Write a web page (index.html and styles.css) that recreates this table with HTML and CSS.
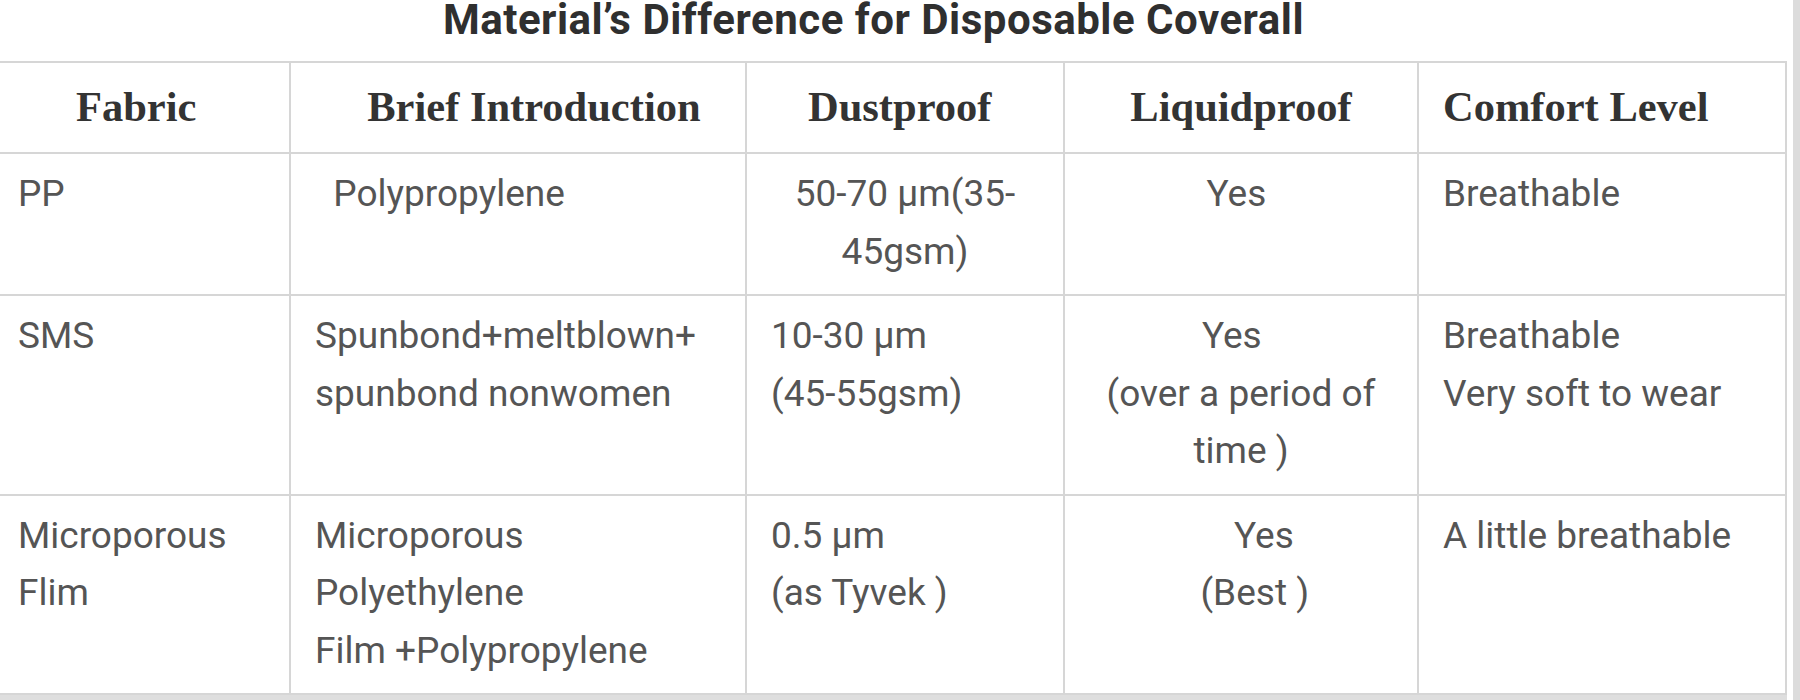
FILE: index.html
```html
<!DOCTYPE html>
<html lang="en">
<head>
<meta charset="utf-8">
<title>Material's Difference for Disposable Coverall</title>
<link rel="stylesheet" href="styles.css">
</head>
<body>
<div class="page">
  <div class="scroller">
    <h2 class="title">Material’s Difference for Disposable Coverall</h2>
    <table class="compare">
      <colgroup>
        <col class="c1"><col class="c2"><col class="c3"><col class="c4"><col class="c5">
      </colgroup>
      <thead>
        <tr>
          <th>Fabric&nbsp;</th>
          <th>&nbsp;&nbsp;&nbsp;Brief Introduction</th>
          <th>Dustproof&nbsp;</th>
          <th>Liquidproof</th>
          <th class="left">Comfort Level</th>
        </tr>
      </thead>
      <tbody>
        <tr>
          <td>PP</td>
          <td>&nbsp;&nbsp;Polypropylene</td>
          <td class="center">50-70 μm(35-<br>45gsm)</td>
          <td class="center">Yes&nbsp;</td>
          <td>Breathable</td>
        </tr>
        <tr>
          <td>SMS</td>
          <td>Spunbond+meltblown+<br>spunbond nonwomen</td>
          <td>10-30 μm<br>(45-55gsm)</td>
          <td class="center">Yes&nbsp;&nbsp;<br>(over a period of<br>time )</td>
          <td>Breathable<br>Very soft to wear</td>
        </tr>
        <tr>
          <td>Microporous<br>Flim</td>
          <td>Microporous<br>Polyethylene<br>Film +Polypropylene</td>
          <td>0.5 μm<br>(as Tyvek )</td>
          <td class="center">&nbsp;&nbsp;&nbsp;&nbsp;&nbsp;Yes<br>&nbsp;&nbsp;&nbsp;(Best )</td>
          <td>A little breathable</td>
        </tr>
      </tbody>
    </table>
    <div class="track"></div>
  </div>
</div>
</body>
</html>
```

FILE: styles.css
```css
html, body {
  margin: 0;
  padding: 0;
}

body {
  background: #dcdcdc;
  font-family: Roboto, "Liberation Sans", sans-serif;
  color: #555;
}

.page {
  width: 1793px;
  height: 700px;
  background: #fff;
  overflow: hidden;
}

.scroller {
  margin-left: -8px;
  width: 1795px;
}

.title {
  margin: 0;
  padding: 0 32px 0 0;
  height: 61px;
  font-size: 42px;
  line-height: 39px;
  letter-spacing: 0.5px;
  font-weight: 700;
  color: #2f2f2f;
  text-align: center;
  white-space: nowrap;
}

.compare {
  width: 1795px;
  table-layout: fixed;
  border-collapse: collapse;
  border: 2px solid #d6d6d6;
}

.c1 { width: 297px; }
.c2 { width: 456px; }
.c3 { width: 318px; }
.c4 { width: 354px; }
.c5 { width: 368px; }

.compare th,
.compare td {
  border: 2px solid #d6d6d6;
  vertical-align: top;
}

.compare th {
  font-family: "Liberation Serif", "Times New Roman", serif;
  font-weight: 700;
  font-size: 42.5px;
  line-height: 51px;
  color: #333;
  padding: 18px 24px 20px;
  text-align: center;
  vertical-align: middle;
  white-space: nowrap;
}

.compare th.left {
  text-align: left;
}

.compare td {
  font-size: 37px;
  line-height: 57.5px;
  padding: 11px 24px 14px;
  text-align: left;
}

.compare td.center {
  text-align: center;
}

.track {
  height: 8px;
  width: 1795px;
  background: #dedede;
}
```
